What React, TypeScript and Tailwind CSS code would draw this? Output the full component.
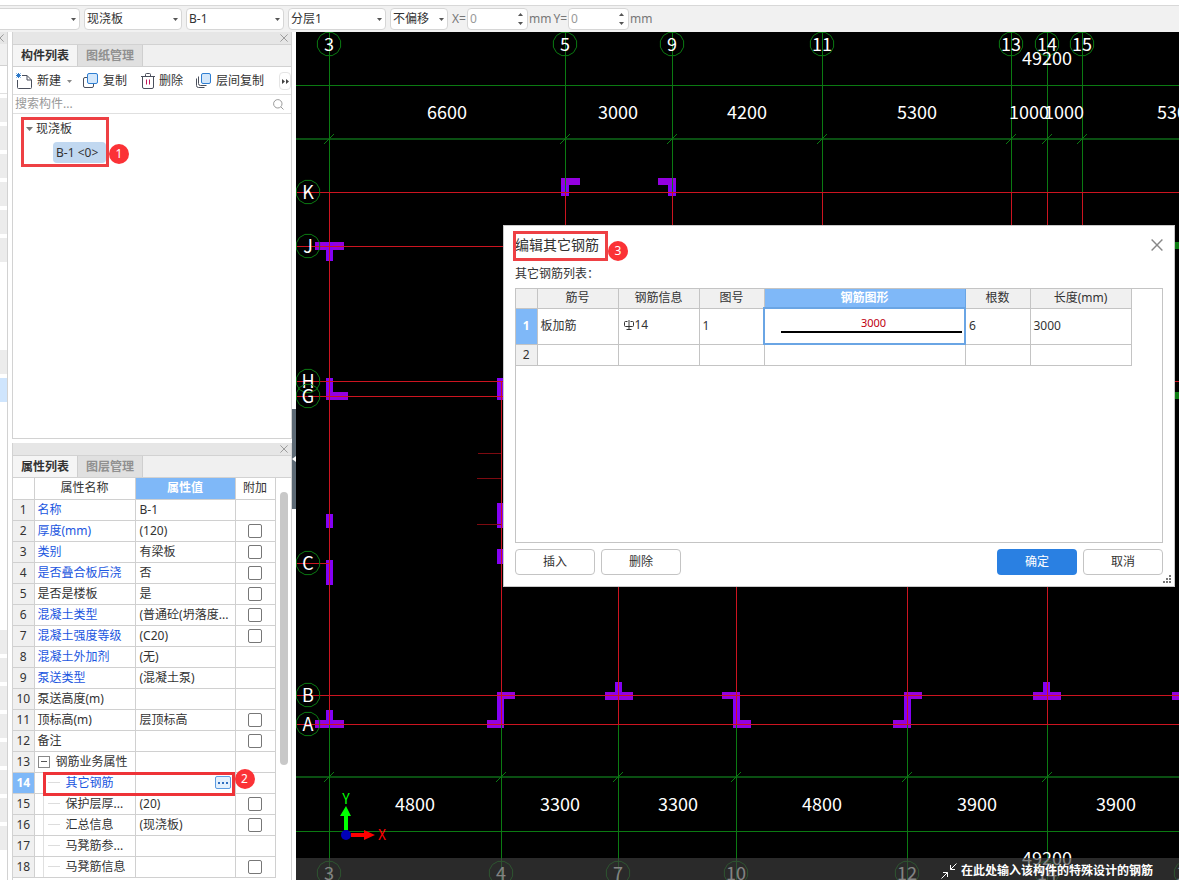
import { useState } from 'react'
import type { ReactNode } from 'react'

const GREEN = '#0b7a12'
const DARK_GREEN = '#0a4f12'
const RED = '#cc1420'
const DARK_RED = '#7d0a10'

type Property = {
  name: string
  value: string
  blue?: boolean
  check?: boolean
  group?: boolean
  child?: boolean
  active?: boolean
}

const properties: Property[] = [
  { name: '名称', value: 'B-1', blue: true },
  { name: '厚度(mm)', value: '(120)', blue: true, check: true },
  { name: '类别', value: '有梁板', blue: true, check: true },
  { name: '是否叠合板后浇', value: '否', blue: true, check: true },
  { name: '是否是楼板', value: '是', check: true },
  { name: '混凝土类型', value: '(普通砼(坍落度...', blue: true, check: true },
  { name: '混凝土强度等级', value: '(C20)', blue: true, check: true },
  { name: '混凝土外加剂', value: '(无)', blue: true },
  { name: '泵送类型', value: '(混凝土泵)', blue: true },
  { name: '泵送高度(m)', value: '' },
  { name: '顶标高(m)', value: '层顶标高', check: true },
  { name: '备注', value: '', check: true },
  { name: '钢筋业务属性', value: '', group: true },
  { name: '其它钢筋', value: '', blue: true, child: true, active: true },
  { name: '保护层厚...', value: '(20)', child: true, check: true },
  { name: '汇总信息', value: '(现浇板)', child: true, check: true },
  { name: '马凳筋参...', value: '', child: true },
  { name: '马凳筋信息', value: '', child: true, check: true },
]

// Grid axes of the plan, in drawing coordinates
const topAxes = [
  { x: 329, label: '3' },
  { x: 565, label: '5' },
  { x: 672, label: '9' },
  { x: 822, label: '11' },
  { x: 1011, label: '13' },
  { x: 1047, label: '14' },
  { x: 1082, label: '15' },
]

const bottomAxes = [
  { x: 329, label: '3' },
  { x: 501, label: '4' },
  { x: 618, label: '7' },
  { x: 736, label: '10' },
  { x: 907, label: '12' },
  { x: 1047, label: '14' },
  { x: 1186, label: '16' },
]

const sideAxes = [
  { y: 192, label: 'K', end: 2400 },
  { y: 246, label: 'J', end: 2400 },
  { y: 381, label: 'H', end: 2400 },
  { y: 396, label: 'G', end: 2400 },
  { y: 563, label: 'C', end: 330 },
  { y: 695, label: 'B', end: 2400 },
  { y: 724, label: 'A', end: 2400 },
]

const dimensions = [
  { x: 447, y: 112, label: '6600' },
  { x: 618, y: 112, label: '3000' },
  { x: 747, y: 112, label: '4200' },
  { x: 917, y: 112, label: '5300' },
  { x: 1029, y: 112, label: '1000' },
  { x: 1064, y: 112, label: '1000' },
  { x: 1177, y: 112, label: '5300' },
  { x: 1047, y: 58, label: '49200' },
  { x: 415, y: 804, label: '4800' },
  { x: 560, y: 804, label: '3300' },
  { x: 678, y: 804, label: '3300' },
  { x: 822, y: 804, label: '4800' },
  { x: 977, y: 804, label: '3900' },
  { x: 1116, y: 804, label: '3900' },
  { x: 1047, y: 858, label: '49200' },
]

// Shear walls: x, y, width, height
const walls = [
  [561, 178, 8, 18], [561, 178, 19, 7],
  [668, 178, 8, 18], [658, 178, 18, 7],
  [315, 242, 29, 8], [326, 242, 7, 19],
  [326, 378, 7, 22], [326, 392, 22, 8],
  [326, 514, 7, 14], [326, 560, 7, 25],
  [497, 378, 6, 22], [497, 503, 6, 25], [497, 549, 6, 15],
  [315, 720, 29, 8], [326, 710, 7, 17],
  [497, 692, 7, 36], [497, 692, 18, 7], [487, 720, 17, 8],
  [605, 692, 28, 8], [615, 682, 7, 14],
  [733, 692, 7, 36], [722, 692, 18, 7], [733, 720, 18, 8],
  [904, 692, 7, 36], [904, 692, 18, 7], [893, 720, 18, 8],
  [1033, 692, 28, 8], [1043, 682, 7, 14],
  [1172, 692, 18, 8],
]

function Bubble({ x, y, label }: { x: number; y: number; label: string }) {
  const points = Array.from({ length: 12 }, (_, i) => {
    const a = ((i + 0.5) * Math.PI) / 6
    return `${(x + 12 * Math.cos(a)).toFixed(1)},${(y + 12 * Math.sin(a)).toFixed(1)}`
  }).join(' ')
  return (
    <g>
      <polygon points={points} fill="none" stroke={GREEN} />
      <text x={x} y={y + 7} textAnchor="middle">{label}</text>
    </g>
  )
}

function Plan() {
  return (
    <svg className="absolute inset-0 h-full w-full" role="img" aria-label="平面图">
      <g
        transform="translate(-296 -32)"
        fill="#fff"
        fontSize="18"
        fontFamily='"Noto Sans CJK SC", sans-serif'
      >
        {walls.map(([x, y, w, h], i) => (
          <rect key={i} x={x} y={y} width={w} height={h} fill={w > h ? '#9400e0' : '#8500f5'} />
        ))}
        <g strokeWidth="1" shapeRendering="crispEdges">
          {[85, 831].map((y) => (
            <path key={y} d={`M296 ${y}.5H2400`} stroke={GREEN} />
          ))}
          <path d="M296 139H2400M296 777H2400" stroke={DARK_GREEN} strokeWidth="2" />
          {topAxes.map((a) => (
            <g key={a.x}>
              <path d={`M${a.x}.5 32V192`} stroke={GREEN} />
              <path d={`M${a.x}.5 192V${a.x === 329 ? 724 : 300}`} stroke={RED} />
            </g>
          ))}
          {bottomAxes.map((a) => (
            <g key={a.x}>
              {a.x !== 329 && <path d={`M${a.x}.5 ${a.x === 501 ? 381 : 560}V724`} stroke={RED} />}
              <path d={`M${a.x}.5 724V880`} stroke={GREEN} />
            </g>
          ))}
          {sideAxes.map((a) => (
            <path key={a.y} d={`M296 ${a.y}.5H${a.end}`} stroke={RED} />
          ))}
          <path d="M478 453.5H501M477 478.5H501M477 524.5H501" stroke={DARK_RED} />
        </g>
        <g stroke={GREEN}>
          {topAxes.map((a) => (
            <path key={a.x} d={`M${a.x - 5} 144l10-10`} />
          ))}
          {bottomAxes.map((a) => (
            <path key={a.x} d={`M${a.x - 5} 782l10-10`} />
          ))}
        </g>
        {topAxes.map((a) => <Bubble key={a.x} x={a.x} y={44} label={a.label} />)}
        {bottomAxes.map((a) => <Bubble key={a.x} x={a.x} y={873} label={a.label} />)}
        {sideAxes.map((a) => <Bubble key={a.y} x={308} y={a.y} label={a.label} />)}
        {dimensions.map((d, i) => (
          <text key={i} x={d.x} y={d.y + 7} textAnchor="middle">{d.label}</text>
        ))}
        <path d="M1175 242h10v7h-10zM1175 392h10v7h-10z" fill="#0f7d14" />

        {/* UCS icon */}
        <path d="M344 830v-14h-4l6-10 5 10h-3v14z" fill="#0f0" />
        <path d="M351 833h13v-3l11 5-11 5v-3h-13z" fill="#f00" />
        <circle cx="346" cy="835" r="5" fill="#0000b8" />
        <text x="346" y="804" fontSize="14" textAnchor="middle" fill="#0f0">Y</text>
        <text x="382" y="840" fontSize="14" textAnchor="middle" fill="#f00">X</text>
      </g>
    </svg>
  )
}

function Caret({ className = '' }: { className?: string }) {
  return (
    <svg width="5" height="3" viewBox="0 0 5 3" className={className} aria-hidden="true">
      <path d="M0 0h5L2.500 3z" fill="currentColor" />
    </svg>
  )
}

function Cross({ size }: { size: number }) {
  return (
    <svg width={size} height={size} viewBox="0 0 10 10" stroke="currentColor" strokeWidth="1.200" fill="none" aria-hidden="true">
      <path d="M.5.5l9 9M9.500.5l-9 9" />
    </svg>
  )
}

function Badge({ children, className }: { children: ReactNode; className: string }) {
  return (
    <span
      className={`absolute z-20 flex h-5 w-5 items-center justify-center rounded-full bg-[#fb3236] text-xs font-normal text-white ${className}`}
    >
      {children}
    </span>
  )
}

function ToolSelect({ label, value, className }: { label: string; value: string; className: string }) {
  return (
    <div className={`relative h-[22px] shrink-0 ${className}`}>
      <select
        aria-label={label}
        defaultValue={value}
        className="h-full w-full appearance-none rounded-sm border border-[#d6d6d6] bg-white pl-0.5 text-xs text-[#333]"
      >
        <option>{value}</option>
      </select>
      <Caret className="pointer-events-none absolute right-1 top-2.5 text-[#555]" />
    </div>
  )
}

function OffsetInput({ label }: { label: string }) {
  const [value, setValue] = useState(0)
  return (
    <div className="flex items-center gap-px text-[#777]">
      <label htmlFor={`offset-${label}`}>{label}=</label>
      <div className="flex h-[22px] w-[61px] items-center rounded-sm border border-[#d6d6d6] bg-white pr-1">
        <input
          id={`offset-${label}`}
          value={value}
          onChange={(e) => setValue(Number(e.target.value) || 0)}
          className="w-full min-w-0 bg-transparent pl-0.5 text-[#999] outline-none"
        />
        <div className="flex flex-col gap-1.5 text-[#555]">
          <button type="button" aria-label={`${label} +`} onClick={() => setValue(value + 1)}>
            <Caret className="rotate-180" />
          </button>
          <button type="button" aria-label={`${label} -`} onClick={() => setValue(value - 1)}>
            <Caret />
          </button>
        </div>
      </div>
      <span>mm</span>
    </div>
  )
}

function PanelHead({ tabs }: { tabs: string[] }) {
  return (
    <>
      <div className="flex h-3 shrink-0 items-center justify-end bg-[#e6e6e6] pr-[3px] text-[#999]">
        <button type="button" aria-label="关闭"><Cross size={8} /></button>
      </div>
      <div role="tablist" className="flex h-[23px] shrink-0 border-y border-[#d2d2d2] bg-[#f0f0f0]">
        {tabs.map((t, i) => (
          <button
            key={t}
            type="button"
            role="tab"
            aria-selected={i === 0}
            className={`w-[65px] border-r border-[#cfcfcf] font-bold ${i === 0 ? 'bg-[#f5f5f5] text-[#333]' : 'bg-[#e0e0e0] text-[#909090]'}`}
          >
            {t}
          </button>
        ))}
      </div>
    </>
  )
}

function NewIcon() {
  return (
    <svg width="17" height="17" viewBox="0 0 17 17" fill="none" aria-hidden="true">
      <path d="M6 2.500h5l4.500 4.500v7.500q0 1-1 1h-12q-1 0-1-1V7M11 2.500V7h4.500" stroke="#4a4f5c" />
      <path d="M.5.5l4 4M4.500.5l-4 4M2.500 0v5M0 2.500h5" stroke="#2b78c8" />
    </svg>
  )
}

function CopyIcon() {
  return (
    <svg width="16" height="16" viewBox="0 0 16 16" fill="none" aria-hidden="true">
      <path d="M4 4.500H2q-1.500 0-1.500 1.500v7q0 1.500 1.500 1.500h7q1.500 0 1.500-1.500v-2" stroke="#4a4f5c" />
      <rect x="4.500" y=".5" width="10" height="10" rx="1.500" fill="#d3e7fb" stroke="#2f7fd2" />
    </svg>
  )
}

function TrashIcon() {
  return (
    <svg width="14" height="16" viewBox="0 0 14 16" fill="none" aria-hidden="true">
      <path d="M0 3.500h14M4.500 3.500v-2q0-1 1-1h3q1 0 1 1v2M1.500 3.500V14q0 1.500 1.500 1.500h8q1.500 0 1.500-1.500V3.500" stroke="#4a4f5c" />
      <path d="M5.500 6.500v5M8.500 6.500v5" stroke="#c2185b" />
    </svg>
  )
}

function LayerCopyIcon() {
  return (
    <svg width="16" height="16" viewBox="0 0 16 16" fill="none" aria-hidden="true">
      <path d="M.5 5.500v7q0 2 2 2h6M2.500 3.500v7q0 2 2 2h6" stroke="#4a4f5c" />
      <rect x="5.500" y=".5" width="9" height="10" rx="1.500" fill="#d3e7fb" stroke="#2f7fd2" />
    </svg>
  )
}

function ComponentPanel() {
  return (
    <section className="flex h-[407px] shrink-0 flex-col border border-t-0 border-[#d2d2d2] bg-white">
      <PanelHead tabs={['构件列表', '图纸管理']} />
      <div className="flex h-7 shrink-0 items-center border-b border-[#e0e0e0] pl-[3px] pt-px text-[#333]">
        <button type="button" className="flex w-[67px] items-center gap-1">
          <NewIcon />新建<Caret className="ml-0.5 text-[#888]" />
        </button>
        <button type="button" className="flex w-[58px] items-center gap-1"><CopyIcon />复制</button>
        <button type="button" className="flex w-[55px] items-center gap-1"><TrashIcon />删除</button>
        <button type="button" className="flex items-center gap-1"><LayerCopyIcon />层间复制</button>
        <button type="button" aria-label="更多" className="ml-auto flex h-[18px] w-3 items-center rounded-sm border border-[#e5e5e5] pl-0.5">
          <svg width="7" height="5" viewBox="0 0 7 5" fill="#444" aria-hidden="true">
            <path d="M0 0l3 2.500L0 5zM4 0l3 2.500L4 5z" />
          </svg>
        </button>
      </div>
      <div className="flex h-[19px] shrink-0 items-center border-b border-[#e0e0e0] pl-0.5 pr-[7px]">
        <input
          aria-label="搜索构件"
          placeholder="搜索构件..."
          className="min-w-0 flex-1 outline-none placeholder:text-[#999]"
        />
        <svg width="11" height="11" viewBox="0 0 11 11" fill="none" stroke="#999" aria-hidden="true">
          <circle cx="4.800" cy="4.800" r="4.200" />
          <path d="M8 8l2.500 2.500" />
        </svg>
      </div>
      <div className="relative ml-2 mt-[3px] h-[50px] w-[88px] border-[3px] border-[#ee4044] pl-0.5 text-[#333]">
        <div className="flex h-[18px] items-center gap-[3px]">
          <svg width="7" height="4" viewBox="0 0 7 4" fill="#777" aria-hidden="true"><path d="M0 0h7L3.500 4z" /></svg>
          现浇板
        </div>
        <div className="ml-[27px] mt-1 flex h-[21px] items-center whitespace-nowrap rounded-sm bg-[#c1d8f0] pl-[3px]">B-1 &lt;0&gt;</div>
        <Badge className="left-[85px] top-6">1</Badge>
      </div>
    </section>
  )
}

function PropertyPanel() {
  return (
    <section className="mt-1 flex min-h-0 flex-1 flex-col border-x border-[#d2d2d2] bg-white">
      <PanelHead tabs={['属性列表', '图层管理']} />
      <div className="flex min-h-0 flex-1 overflow-hidden">
        <table className="h-fit w-[262px] shrink-0 table-fixed border-collapse text-[#333]">
          <colgroup>
            <col className="w-[21px]" />
            <col className="w-[101px]" />
            <col className="w-[100px]" />
            <col className="w-[40px]" />
          </colgroup>
          <thead>
            <tr className="h-[21px]">
              <th className="border-b border-r border-[#d0d0d0] p-0" />
              <th className="border-b border-r border-[#d0d0d0] p-0 font-normal">属性名称</th>
              <th className="border-b border-r border-[#d0d0d0] bg-[#7fb8f8] p-0 font-bold text-white">属性值</th>
              <th className="border-b border-r border-[#d0d0d0] p-0 font-normal">附加</th>
            </tr>
          </thead>
          <tbody>
            {properties.map((p, i) => (
              <tr key={p.name} className="h-[21px]">
                <td className={`border-b border-r border-[#d0d0d0] p-0 text-center ${p.active ? 'bg-[#7fb8f8] font-bold text-white' : 'bg-[#f0f0f0]'}`}>
                  {i + 1}
                </td>
                <td className={`relative whitespace-nowrap border-b border-r border-[#d0d0d0] py-0 pr-0 ${p.child ? 'pl-[31px]' : 'pl-[3px]'} ${p.blue ? 'text-[#1a56e0]' : ''}`}>
                  {p.child && (
                    <span className="absolute inset-y-0 left-2 flex w-5 items-center border-l border-[#e0e0e0]">
                      <span className="ml-1 h-px w-3 bg-[#ddd]" />
                    </span>
                  )}
                  {p.group ? (
                    <span className="flex items-center gap-1.5">
                      <button type="button" aria-label="折叠" className="flex h-3 w-3 items-center justify-center border border-[#888]">
                        <span className="h-px w-1.5 bg-[#555]" />
                      </button>
                      {p.name}
                    </span>
                  ) : p.name}
                  {p.active && (
                    <span className="pointer-events-none absolute -top-px left-2 z-10 h-6 w-[192px] border-[3px] border-[#ee3338]">
                      <Badge className="-top-1.5 left-[189px]">2</Badge>
                    </span>
                  )}
                </td>
                <td className={`whitespace-nowrap border-b border-r border-[#d0d0d0] py-0 pl-1 pr-0 ${p.active ? 'border-l border-l-[#6aa5e4]' : ''}`}>
                  {p.active ? (
                    <button type="button" aria-label="编辑" className="ml-auto mr-1 flex h-[13px] w-4 items-center justify-center gap-0.5 rounded-xs border border-[#5c9be0] bg-[#e3f0fd]">
                      <span className="h-0.5 w-0.5 bg-[#2f6fc0]" />
                      <span className="h-0.5 w-0.5 bg-[#2f6fc0]" />
                      <span className="h-0.5 w-0.5 bg-[#2f6fc0]" />
                    </button>
                  ) : p.value}
                </td>
                <td className="border-b border-r border-[#d0d0d0] p-0">
                  {p.check && (
                    <input
                      type="checkbox"
                      aria-label={`${p.name} 附加`}
                      className="mx-auto block h-3.5 w-3.5 appearance-none rounded-xs border border-[#777] bg-white checked:bg-[#2b7fe3]"
                    />
                  )}
                </td>
              </tr>
            ))}
          </tbody>
        </table>
        <div className="ml-1 mt-3.5 h-[273px] w-2 rounded-full bg-[#c8c8c8]" />
      </div>
    </section>
  )
}

function Strip({ count }: { count: number }) {
  return (
    <>
      {Array.from({ length: count }, (_, i) => (
        <div key={i} className="h-6 shrink-0 bg-[#ececec]" />
      ))}
    </>
  )
}

function RebarDialog() {
  const head = 'border-b border-r border-[#c4c4c4] bg-[#f0f0f0] p-0 font-normal'
  const cell = 'border-b border-r border-[#c4c4c4] py-0 pl-[3px] pr-0'
  return (
    <div
      role="dialog"
      aria-labelledby="rebar-title"
      className="absolute right-1 top-[193px] flex h-[362px] w-[672px] flex-col border border-[#c9c9c9] bg-white pl-[11px] pr-[11px] text-[#333]"
    >
      <div className="flex h-[37px] items-center justify-between">
        <h2 id="rebar-title" className="relative text-sm">
          编辑其它钢筋
          <span className="absolute -left-0.5 -top-1 h-[30px] w-[95px] border-[3px] border-[#ee4044]" />
          <Badge className="left-[93px] top-1.5">3</Badge>
        </h2>
        <button type="button" aria-label="关闭" className="text-[#888]"><Cross size={12} /></button>
      </div>
      <p className="h-[25px] leading-[22px]">其它钢筋列表：</p>
      <div className="h-[255px] border border-[#c4c4c4]">
        <table className="w-[615px] table-fixed border-collapse">
          <colgroup>
            <col className="w-[21px]" />
            <col className="w-[81px]" />
            <col className="w-[81px]" />
            <col className="w-[65px]" />
            <col className="w-[201px]" />
            <col className="w-[65px]" />
            <col className="w-[101px]" />
          </colgroup>
          <thead>
            <tr className="h-[19px] leading-[18px]">
              <th className={head} />
              <th className={head}>筋号</th>
              <th className={head}>钢筋信息</th>
              <th className={head}>图号</th>
              <th className="border-b border-r border-[#6aa5e4] bg-[#7fb8f8] p-0 font-bold text-white">钢筋图形</th>
              <th className={head}>根数</th>
              <th className={head}>长度(mm)</th>
            </tr>
          </thead>
          <tbody>
            <tr className="h-9">
              <td className="border-b border-r border-[#c4c4c4] bg-[#7fb8f8] p-0 text-center font-bold text-white">1</td>
              <td className={cell}>板加筋</td>
              <td className={cell}>
                <span className="flex items-center gap-px pb-0.5 pl-0.5">
                  <svg width="10" height="10" viewBox="0 0 10 10" fill="none" stroke="#333" aria-label="HRB400" role="img">
                    <path d="M5 0v9M2.500 9.500h5M3.500 1.500h-2q-1 0-1 1v3q0 1 1 1h7q1 0 1-1v-3q0-1-1-1h-2" />
                  </svg>
                  14
                </span>
              </td>
              <td className={cell}>1</td>
              <td className="border-2 border-[#6aa5e4] px-0 pb-1 pt-0">
                <div className="ml-4 mr-0.5 border-b-2 border-black pl-1 text-center text-[11px] leading-4 text-[#c00010]">3000</div>
              </td>
              <td className={cell}>6</td>
              <td className={cell}>3000</td>
            </tr>
            <tr className="h-[21px]">
              <td className="border-b border-r border-[#c4c4c4] bg-[#f0f0f0] p-0 text-center">2</td>
              <td className={cell} />
              <td className={cell} />
              <td className={cell} />
              <td className={cell} />
              <td className={cell} />
              <td className={cell} />
            </tr>
          </tbody>
        </table>
      </div>
      <div className="mt-1.5 flex gap-1.5">
        <button type="button" className="h-[26px] w-20 rounded-sm border border-[#c4c4c4]">插入</button>
        <button type="button" className="h-[26px] w-20 rounded-sm border border-[#c4c4c4]">删除</button>
        <button type="button" className="ml-auto h-[26px] w-20 rounded-sm bg-[#2a80e2] text-white">确定</button>
        <button type="button" className="h-[26px] w-20 rounded-sm border border-[#c4c4c4]">取消</button>
      </div>
      <svg width="8" height="8" viewBox="0 0 8 8" fill="#777" className="absolute bottom-[3px] right-[3px]" aria-hidden="true">
        <path d="M6 0h2v2H6zM3 3h2v2H3zM6 3h2v2H6zM0 6h2v2H0zM3 6h2v2H3zM6 6h2v2H6z" />
      </svg>
    </div>
  )
}

export default function App() {
  return (
    <div className='flex h-screen flex-col overflow-hidden bg-white font-["Noto_Sans","Noto_Sans_CJK_SC",sans-serif] text-xs'>
      <header className="mt-[5px] flex h-[27px] shrink-0 items-center gap-1 border-t border-[#d8d8d8] bg-[#f1f1f1]">
        <ToolSelect label="楼层" value="" className="-ml-1 w-[84px]" />
        <ToolSelect label="构件类型" value="现浇板" className="w-[98px]" />
        <ToolSelect label="构件" value="B-1" className="w-[98px]" />
        <ToolSelect label="分层" value="分层1" className="w-[98px]" />
        <ToolSelect label="偏移" value="不偏移" className="w-[58px]" />
        <div className="flex gap-0.5">
          <OffsetInput label="X" />
          <OffsetInput label="Y" />
        </div>
      </header>

      <div className="flex min-h-0 flex-1">
        <div className="flex w-2 shrink-0 flex-col gap-1 overflow-hidden border-r border-[#d2d2d2]">
          <div className="h-[34px] shrink-0 border-b border-[#d2d2d2] bg-[#f0f0f0]">
            <div className="flex h-3 items-center justify-start bg-[#e6e6e6] text-[#999]">
              <span className="-ml-1"><Cross size={8} /></span>
            </div>
          </div>
          <div className="h-6 shrink-0 border-b border-[#e0e0e0]" />
          <Strip count={6} />
          <div className="h-20 shrink-0" />
          <Strip count={1} />
          <div className="h-6 shrink-0 bg-[#cfe5fd]" />
          <div className="h-[220px] shrink-0" />
          <Strip count={8} />
        </div>

        <div className="ml-1 flex w-[280px] shrink-0 flex-col">
          <ComponentPanel />
          <PropertyPanel />
        </div>

        <button type="button" aria-label="收起" className="mt-[377px] flex h-[100px] w-1 shrink-0 items-center bg-[#5d6a75]">
          <svg width="4" height="6" viewBox="0 0 4 6" fill="#fff" aria-hidden="true"><path d="M4 0v6L0 3z" /></svg>
        </button>

        <main className="relative min-w-0 flex-1 overflow-hidden bg-black">
          <Plan />
          <div className="absolute inset-x-0 bottom-0 flex h-[22px] items-center justify-end gap-1 bg-[#404040]/65 pr-[26px] pt-1 font-bold text-white">
            <svg width="16" height="16" viewBox="0 0 16 16" fill="none" stroke="#fff" aria-hidden="true">
              <path d="M15.500.5l-6 6M9.500 2v4.500H14M.5 15.500l6-6M2 9.500h4.500V14" />
            </svg>
            在此处输入该构件的特殊设计的钢筋
          </div>
          <RebarDialog />
        </main>
      </div>
    </div>
  )
}
